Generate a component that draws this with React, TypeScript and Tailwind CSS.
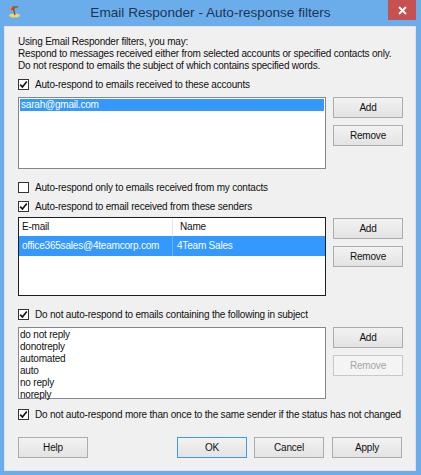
import React from "react";

function Check({ checked }: { checked: boolean }) {
  return (
    <div className="w-[11px] h-[11px] border border-[#333333] bg-white flex items-center justify-center shrink-0">
      {checked && (
        <svg width="9" height="9" viewBox="0 0 9 9">
          <path d="M1.2 4.6 L3.4 7 L7.8 1.4" fill="none" stroke="#111" strokeWidth="1.6" />
        </svg>
      )}
    </div>
  );
}

function CheckRow({ checked, label }: { checked: boolean; label: string }) {
  return (
    <div className="h-[13px] flex items-center gap-[6px]">
      <Check checked={checked} />
      <span className="leading-[13px] whitespace-nowrap">{label}</span>
    </div>
  );
}

function Btn({
  label,
  disabled,
  isDefault,
  className = "",
}: {
  label: string;
  disabled?: boolean;
  isDefault?: boolean;
  className?: string;
}) {
  const base =
    "w-[70px] h-[21px] flex items-center justify-center leading-none border " +
    (disabled
      ? "border-[#c8c8c8] bg-[#f4f4f4] text-[#a6a6a6]"
      : isDefault
      ? "border-[#3c9be8] bg-gradient-to-b from-[#f2f2f2] to-[#e3e3e3] text-[#111]"
      : "border-[#acacac] bg-gradient-to-b from-[#f2f2f2] to-[#e3e3e3] text-[#111]");
  return <div className={base + " " + className}>{label}</div>;
}

export default function App() {
  return (
    <div className="w-[421px] h-[475px] bg-[#6badea] flex flex-col font-['Liberation_Sans',Arial,sans-serif] text-[10px] tracking-[-0.2px] text-[#111]">
      {/* title bar */}
      <div className="h-[26px] relative flex items-center justify-center shrink-0">
        <svg className="absolute left-[8px] top-[4px]" width="13" height="14" viewBox="0 0 13 14">
          <ellipse cx="6.5" cy="11.5" rx="5.5" ry="2" fill="#f2d46a" />
          <path d="M5.5 5 L7 11" stroke="#7a4a22" strokeWidth="1.2" />
          <path d="M1 6 Q5 0 11 3 Q7 3.5 5 6 Z" fill="#d9342b" />
          <path d="M5 2.5 Q8 1.5 11 3 Q8 3 6 4 Z" fill="#3d9a3a" />
          <path d="M1 6 Q2.5 3 5 2.5 Q3 4.5 3 6 Z" fill="#f0a020" />
        </svg>
        <span className="text-[13.6px] tracking-normal text-[#1e3552] leading-none -mt-[1px]">
          Email Responder - Auto-response filters
        </span>
        <div className="absolute right-[5px] top-0 w-[28px] h-[20px] bg-[#c75050] flex items-center justify-center">
          <svg width="9" height="9" viewBox="0 0 9 9">
            <path d="M1 1 L8 8 M8 1 L1 8" stroke="white" strokeWidth="1.8" />
          </svg>
        </div>
      </div>

      {/* client */}
      <div className="ml-[4px] mr-[5px] mb-[4px] flex-1 bg-[#f0f0f0] border border-[#e2e2e2] pl-[13px] pt-[9px] flex flex-col">
        <div className="leading-[12px]">
          <div>Using Email Responder filters, you may:</div>
          <div>Respond to messages received either from selected accounts or specified contacts only.</div>
          <div>Do not respond to emails the subject of which contains specified words.</div>
        </div>

        <div className="mt-[6px]">
          <CheckRow checked label="Auto-respond to emails received to these accounts" />
        </div>

        <div className="mt-[6px] flex gap-[7px]">
          <div className="w-[308px] h-[72px] border border-[#828790] bg-white p-[1px]">
            <div className="h-[12px] bg-[#3399ff] text-white leading-[12px] pl-[1px]">sarah@gmail.com</div>
          </div>
          <div className="flex flex-col gap-[7px]">
            <Btn label="Add" />
            <Btn label="Remove" />
          </div>
        </div>

        <div className="mt-[12px]">
          <CheckRow checked={false} label="Auto-respond only to emails received from my contacts" />
        </div>
        <div className="mt-[6px]">
          <CheckRow checked label="Auto-respond to email received from these senders" />
        </div>

        <div className="mt-[4px] flex gap-[7px]">
          <div className="w-[308px] h-[79px] border border-[#1e1e1e] bg-white flex flex-col">
            <div className="h-[18px] flex">
              <div className="w-[154px] border-r border-[#e5e5e5] pl-[3px] leading-[18px]">E-mail</div>
              <div className="flex-1 pl-[7px] leading-[18px]">Name</div>
            </div>
            <div className="h-[20px] flex bg-[#3399ff] text-white">
              <div className="w-[154px] border-r border-[#6bb4ff] pl-[3px] leading-[20px] whitespace-nowrap">
                office365sales@4teamcorp.com
              </div>
              <div className="flex-1 pl-[4px] leading-[20px]">4Team Sales</div>
            </div>
          </div>
          <div className="flex flex-col gap-[7px] pt-[1px]">
            <Btn label="Add" />
            <Btn label="Remove" />
          </div>
        </div>

        <div className="mt-[12px]">
          <CheckRow checked label="Do not auto-respond to emails containing the following in subject" />
        </div>

        <div className="mt-[6px] flex gap-[7px]">
          <div className="w-[308px] h-[72px] border border-[#828790] bg-white pl-[1px] pt-[1px] leading-[12px]">
            <div>do not reply</div>
            <div>donotreply</div>
            <div>automated</div>
            <div>auto</div>
            <div>no reply</div>
            <div>noreply</div>
          </div>
          <div className="flex flex-col gap-[7px]">
            <Btn label="Add" />
            <Btn label="Remove" disabled />
          </div>
        </div>

        <div className="mt-[9px]">
          <CheckRow checked label="Do not auto-respond more than once to the same sender if the status has not changed" />
        </div>

        <div className="mt-[16px] flex">
          <Btn label="Help" />
          <Btn label="OK" isDefault className="ml-[89px]" />
          <Btn label="Cancel" className="ml-[7px]" />
          <Btn label="Apply" className="ml-[8px]" />
        </div>
      </div>
    </div>
  );
}
